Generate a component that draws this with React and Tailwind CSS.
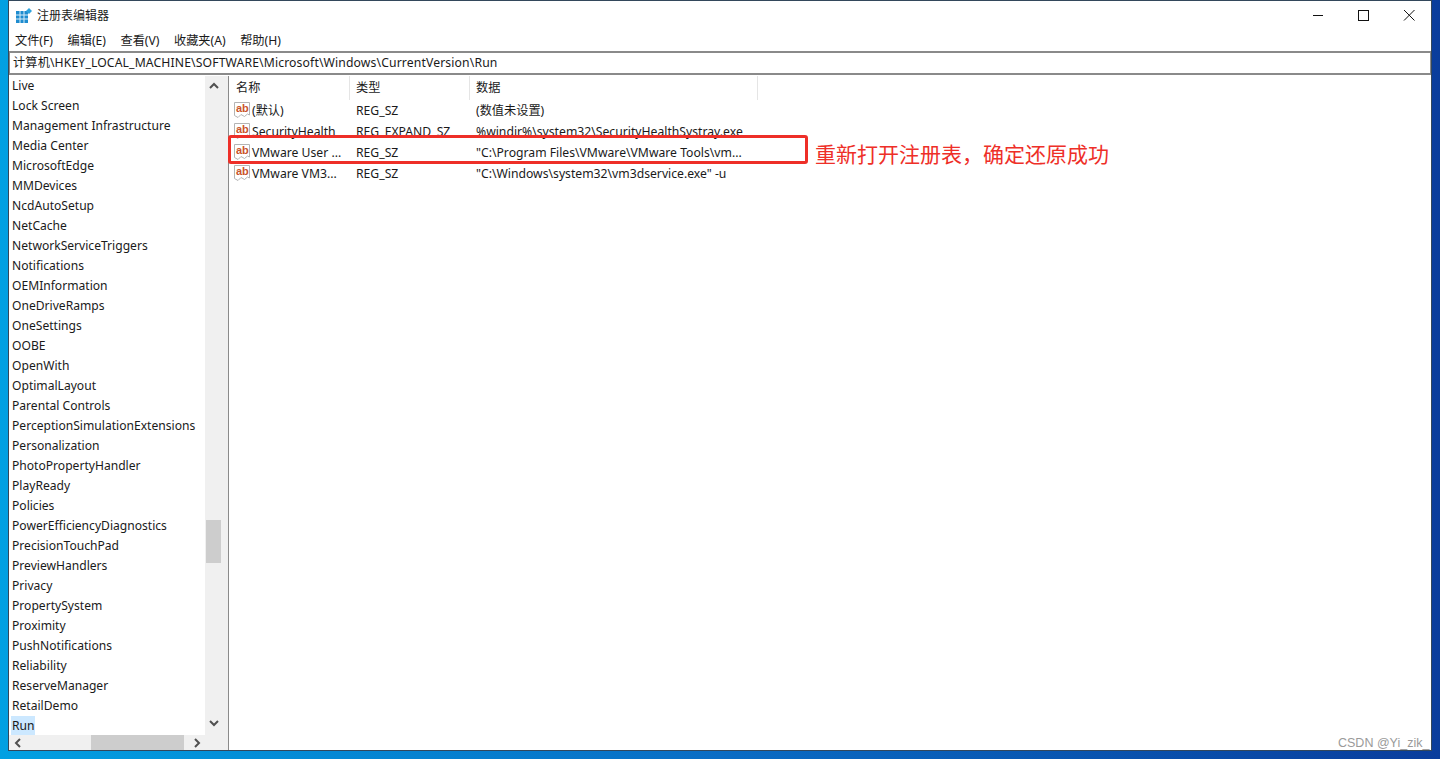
const items = ["Live","Lock Screen","Management Infrastructure","Media Center","MicrosoftEdge","MMDevices","NcdAutoSetup","NetCache","NetworkServiceTriggers","Notifications","OEMInformation","OneDriveRamps","OneSettings","OOBE","OpenWith","OptimalLayout","Parental Controls","PerceptionSimulationExtensions","Personalization","PhotoPropertyHandler","PlayReady","Policies","PowerEfficiencyDiagnostics","PrecisionTouchPad","PreviewHandlers","Privacy","PropertySystem","Proximity","PushNotifications","Reliability","ReserveManager","RetailDemo","Run"];

const rows = [
  ["(默认)", "REG_SZ", "(数值未设置)"],
  ["SecurityHealth", "REG_EXPAND_SZ", "%windir%\\system32\\SecurityHealthSystray.exe"],
  ["VMware User ...", "REG_SZ", "\"C:\\Program Files\\VMware\\VMware Tools\\vm..."],
  ["VMware VM3...", "REG_SZ", "\"C:\\Windows\\system32\\vm3dservice.exe\" -u"],
];

const AbIcon = () => (
  <svg width="16" height="17" viewBox="0 0 16 17" className="shrink-0">
    <path d="M0.5 0.5H15.5V13L13.5 12L10.5 14.5L7 12.5L4 15.5L0.5 13.5Z" fill="#fff" stroke="#b4b4b4" />
    <text x="2" y="10" fontSize="11" fontWeight="700" fill="#c9542c" fontFamily="'Liberation Sans',sans-serif">ab</text>
  </svg>
);

const Chevron = ({ d }) => (
  <svg width="10" height="10" viewBox="0 0 10 10"><path d={d} fill="none" stroke="#505050" strokeWidth="2" /></svg>
);

const RegLogo = () => (
  <svg width="16" height="16" viewBox="0 0 16 16" className="shrink-0">
    <path d="M0 3H12V15H0Z" fill="#1e8ccf" />
    <path d="M4 3V15M8 3V15M0 7H12M0 11H12" stroke="#d6edf9" strokeWidth="1" />
    <path d="M13 0L16 3L13 6L10 3Z" fill="#2fa3dd" />
  </svg>
);

const menus = ["文件(F)", "编辑(E)", "查看(V)", "收藏夹(A)", "帮助(H)"];

export default function App() {
  return (
    <div className="relative h-[759px] w-[1440px] overflow-hidden bg-gradient-to-r from-[#02a0e2] via-[#0a6cc4] to-[#0a3d9c] font-['Noto_Sans','Noto_Sans_CJK_SC',sans-serif] text-[12.2px] text-[#1a1a1a]">
      <div className="ml-2 flex h-[751px] w-[1424px] flex-col border border-[#33475b] bg-white">
        <div className="flex h-[30px] shrink-0 items-start pl-[7px]">
          <span className="mt-[7px]"><RegLogo /></span>
          <span className="ml-[5px] mt-[6px] flex-1 text-[12px] leading-[18px]">注册表编辑器</span>
          <div className="flex h-full items-start">
            <svg width="46" height="30" viewBox="0 0 46 30"><path d="M20 14.5H30" stroke="#111" /></svg>
            <svg width="46" height="30" viewBox="0 0 46 30"><rect x="19.5" y="9.5" width="10" height="10" fill="none" stroke="#111" /></svg>
            <svg width="46" height="30" viewBox="0 0 46 30"><path d="M19 9L29.5 19.5M29.5 9L19 19.5" stroke="#111" /></svg>
          </div>
        </div>
        <div className="flex h-[20px] shrink-0 items-center gap-[14.5px] pl-[6px]">
          {menus.map((m) => <span key={m}>{m}</span>)}
        </div>
        <div className="flex h-6 shrink-0 items-center border-y-2 border-x border-[#8a8a8a] bg-white pl-[3px] tracking-[0.13px]">
          计算机\HKEY_LOCAL_MACHINE\SOFTWARE\Microsoft\Windows\CurrentVersion\Run
        </div>
        <div className="mt-px flex min-h-0 flex-1">
          <div className="flex w-[213px] shrink-0 flex-col">
            <div className="flex min-h-0 flex-1">
              <div className="min-w-0 flex-1 overflow-hidden pl-[2px] text-[12.1px]">
                {items.map((t) => (
                  <div key={t} className="flex h-5 items-center">
                    <span className={t === "Run" ? "bg-[#cce8ff] px-[1px] leading-5" : "px-[1px]"}>{t}</span>
                  </div>
                ))}
              </div>
              <div className="flex w-[17px] shrink-0 flex-col items-center justify-between bg-[#f0f0f0] pb-[7px] pt-[5px]">
                <Chevron d="M1 7L5 3L9 7" />
                <div className="absolute left-[206px] top-[520px] h-[43px] w-[15px] bg-[#cdcdcd]" />
                <Chevron d="M1 3L5 7L9 3" />
              </div>
            </div>
            <div className="flex h-[15px] shrink-0 items-center bg-[#f0f0f0] pl-[4px]">
              <Chevron d="M7 1L3 5L7 9" />
              <div className="ml-[68px] h-[15px] w-[93px] bg-[#cdcdcd]" />
              <span className="ml-[8px]"><Chevron d="M3 1L7 5L3 9" /></span>
            </div>
          </div>
          <div className="w-[6px] shrink-0 bg-[#f0f0f0]" />
          <div className="min-w-0 flex-1 border-l border-[#8a8a8a]">
            <div className="flex h-[24.5px] items-start">
              <div className="h-[24px] w-[121px] border-r border-[#e5e5e5] pl-[7px] leading-6">名称</div>
              <div className="h-[24px] w-[120px] border-r border-[#e5e5e5] pl-[6px] leading-6">类型</div>
              <div className="h-[24px] w-[288px] border-r border-[#e5e5e5] pl-[6px] leading-6">数据</div>
            </div>
            {rows.map((r) => (
              <div key={r[0]} className="flex h-[21px] items-center whitespace-nowrap">
                <div className="flex w-[121px] items-center pl-[5px]"><AbIcon /><span className="ml-[2px]">{r[0]}</span></div>
                <div className="w-[120px] pl-[6px]">{r[1]}</div>
                <div className="pl-[6px]">{r[2]}</div>
              </div>
            ))}
          </div>
        </div>
      </div>
      <div className="absolute left-[228px] top-[135px] h-[29px] w-[580px] rounded-[3px] border-[3px] border-[#ee2f28]" />
      <div className="absolute left-[815px] top-[141px] text-[21px] leading-[26px] text-[#ee2f28]">重新打开注册表，确定还原成功</div>
      <div className="absolute left-[1338px] top-[734px] font-['Liberation_Sans',sans-serif] text-[12.5px] leading-[18px] text-[#9a9a9a]">CSDN @Yi_zik_</div>
    </div>
  );
}
